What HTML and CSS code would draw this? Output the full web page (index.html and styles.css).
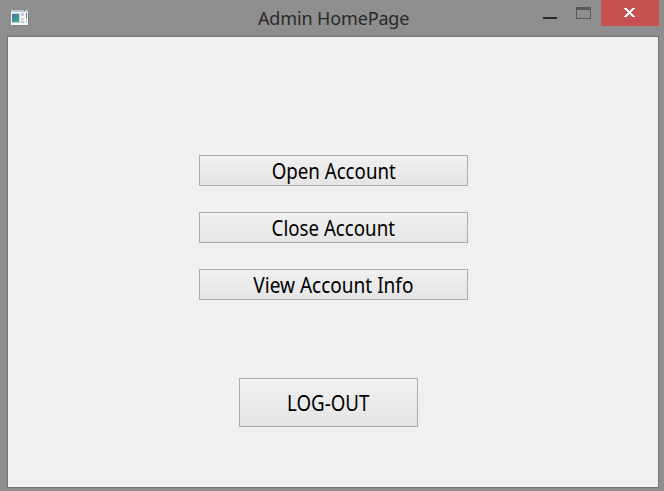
FILE: index.html
```html
<!DOCTYPE html>
<html lang="en">
<head>
<meta charset="utf-8">
<title>Admin HomePage</title>
<link rel="stylesheet" href="styles.css">
</head>
<body>
<div class="window">
  <header class="titlebar">
    <svg class="app-icon" width="20" height="18" viewBox="0 0 20 18" shape-rendering="crispEdges">
      <defs>
        <linearGradient id="photo" x1="0" y1="0" x2="1" y2="1"><stop offset="0" stop-color="#4777a3"/><stop offset=".6" stop-color="#3b9898"/><stop offset="1" stop-color="#54ad72"/></linearGradient>
        <linearGradient id="meter" x1="0" y1="0" x2="0" y2="1"><stop offset="0" stop-color="#2459a0"/><stop offset="1" stop-color="#65c65a"/></linearGradient>
      </defs>
      <path fill="#808080" d="M1 1h17v15H1z"/>
      <path fill="#f7f8fa" d="M0 0h17v15H0z"/>
      <path fill="#b9c7d5" d="M0 0h17v2H0z"/>
      <path fill="#456d87" d="M13 0h1v1h-1z"/>
      <path fill="#c5d2e0" d="M1 3h8v10H1z"/>
      <path fill="url(#photo)" d="M1 4h7v8H1z"/>
      <path fill="#c5c8cc" d="M10 3h3v3h-3zM10 8h3v2h-3zM10 11h3v2h-3zM15 10h1v3h-1z"/>
      <path fill="url(#meter)" d="M15 3h1v6h-1z"/>
    </svg>
    <h1 class="title">Admin HomePage</h1>
    <div class="controls">
      <svg width="58" height="26" viewBox="0 0 58 26" shape-rendering="crispEdges">
        <path fill="#292929" d="M0 17h14v2H0z"/>
        <path fill="#595959" fill-rule="evenodd" d="M33 7h15v12H33zM34 10v8h13v-8z"/>
      </svg>
      <div class="close">
        <svg width="11" height="9" viewBox="0 0 11 9" shape-rendering="crispEdges"><path fill="#fff" d="M0 0h3v1h1v1h1v1h1v-1h1v-1h1v-1h3v1h-1v1h-1v1h-1v1h-1v1h1v1h1v1h1v1h1v1h-3v-1h-1v-1h-1v-1h-1v1h-1v1h-1v1h-3v-1h1v-1h1v-1h1v-1h1v-1h-1v-1h-1v-1h-1v-1h-1z"/></svg>
      </div>
    </div>
  </header>
  <main class="client">
    <button class="button"><span class="label">Open Account</span></button>
    <button class="button"><span class="label">Close Account</span></button>
    <button class="button"><span class="label label-wide">View Account Info</span></button>
    <button class="button logout"><span class="label">LOG-OUT</span></button>
  </main>
</div>
</body>
</html>
```
FILE: styles.css
```css
* { box-sizing: border-box; }
body { margin: 0; overflow: hidden; }
.window {
  width: 664px;
  height: 491px;
  padding: 0 5px 3px 7px;
  background: #8e8e8e;
}
.titlebar {
  display: flex;
  height: 36px;
  padding-left: 4px;
}
.app-icon { margin-top: 10px; flex: none; }
.title {
  margin: 0 0 0 227px;
  width: 285px;
  font: 18px/36px "Noto Sans", sans-serif;
  letter-spacing: -0.14px;
  color: #292929;
  white-space: nowrap;
}
.controls { display: flex; flex: none; }
.close {
  display: flex;
  width: 58px;
  height: 26px;
  padding: 8px 0 0 23px;
  background: #c75050;
}
.client {
  display: flex;
  flex-direction: column;
  height: 452px;
  padding: 118px 0 0 191px;
  border: 1px solid #747474;
  background: #f0f0f0;
}
.button {
  display: flex;
  align-items: center;
  justify-content: center;
  width: 269px;
  height: 31px;
  margin: 0 0 26px;
  padding: 0;
  border: 1px solid #acacac;
  background: linear-gradient(#f0f0f0, #e5e5e5);
  font: 21px/28px "Noto Sans", sans-serif;
  color: #000;
  white-space: nowrap;
}
.label { transform: scaleX(0.89); }
.label-wide { transform: scaleX(0.906); }
.logout {
  width: 179px;
  height: 49px;
  margin: 52px 0 0 40px;
}
```
